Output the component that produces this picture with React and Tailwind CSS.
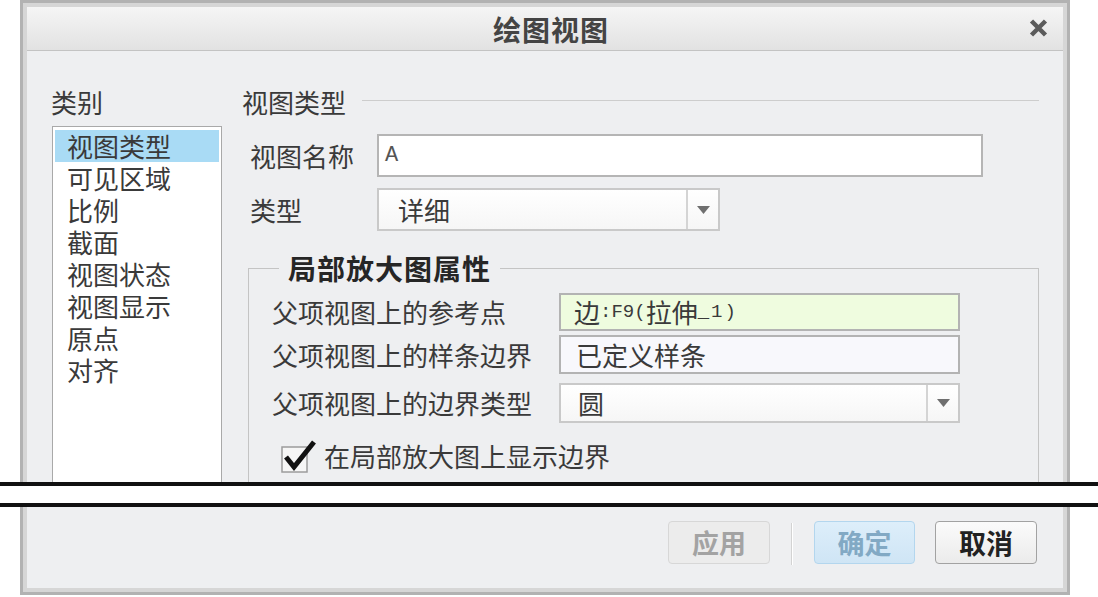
const categories = ['视图类型', '可见区域', '比例', '截面', '视图状态', '视图显示', '原点', '对齐'];

const Arrow = () => (
  <svg width="13" height="8" viewBox="0 0 13 8">
    <path d="M0 0 L13 0 L6.5 8 Z" fill="#6f6f6f" />
  </svg>
);

const Select = ({ value, className }) => (
  <div className={`flex h-full border-2 border-[#c9c9c9] bg-gradient-to-b from-white to-[#f6f6f6] ${className}`}>
    <div className="flex-1 flex items-center leading-none">{value}</div>
    <div className="w-[32px] border-l-2 border-[#d4d4d4] flex items-center justify-center">
      <Arrow />
    </div>
  </div>
);

const PropRow = ({ label, children, className }) => (
  <div className={`flex items-center ${className}`}>
    <div className="w-[310px] pl-[23px] leading-none">{label}</div>
    {children}
  </div>
);

const App = () => {
  return (
    <div className="w-[1098px] h-[597px] bg-white overflow-hidden text-[26px] text-[#3a3a3a] font-['Noto_Sans_CJK_SC',sans-serif]">
      {/* upper half of the dialog */}
      <div className="ml-[20px] w-[1050px] h-[482px] border-x-[3px] border-t-[3px] border-[#b2b2b2] overflow-hidden">
        <div className="h-full border-x-[4px] border-t-[4px] border-[#d6d6d6] bg-[#eeeff1] flex flex-col">
          <div className="h-[44px] shrink-0 border-b border-[#c3c3c3] bg-gradient-to-b from-[#f5f5f5] to-[#e2e2e2] flex items-center relative">
            <div className="flex-1 text-center text-[28px] font-bold tracking-[1px] text-[#444] leading-none pl-[12px]">绘图视图</div>
            <div className="absolute right-[15px] top-[12px]">
              <svg width="19" height="18" viewBox="0 0 19 18">
                <path d="M2.5 2 L16.5 16 M16.5 2 L2.5 16" stroke="#5b5b5b" strokeWidth="4.5" />
              </svg>
            </div>
          </div>

          <div className="flex pl-[24px]">
            <div className="w-[171px] pt-[36px]">
              <div className="leading-[30px]">类别</div>
              <div className="mt-[9px] ml-[1px] w-[170px] h-[400px] border border-[#a9a9a9] bg-white pt-[3px] px-[2px]">
                {categories.map((c, i) => (
                  <div
                    key={c}
                    className={`h-[32px] leading-[32px] pl-[12px] ${i === 0 ? 'bg-[#a9dbf5]' : ''}`}
                  >
                    {c}
                  </div>
                ))}
              </div>
            </div>

            <div className="ml-[20px] w-[797px] pt-[36px]">
              <div className="flex items-center h-[30px]">
                <span className="leading-none">视图类型</span>
                <div className="flex-1 h-px bg-[#cdcdcd] ml-[16px] mb-[4px]" />
              </div>

              <div className="flex items-center mt-[17px] h-[43px]">
                <div className="w-[135px] pl-[8px] leading-none">视图名称</div>
                <div className="w-[606px] h-full border-2 border-[#b5b5b5] bg-white flex items-center pl-[6px] text-[22px] text-[#555] font-['Liberation_Mono',monospace]">
                  A
                </div>
              </div>

              <div className="flex items-center mt-[11px] h-[43px]">
                <div className="w-[135px] pl-[8px] leading-none">类型</div>
                <Select value="详细" className="w-[343px] pl-[19px]" />
              </div>

              <fieldset className="mt-[21px] ml-[6px] w-[791px] border border-[#c4c4c4] pb-[40px]">
                <legend className="ml-[30px] px-[9px] leading-[32px] text-[28px] font-bold tracking-[1px] text-[#262626]">
                  局部放大图属性
                </legend>

                <PropRow label="父项视图上的参考点" className="mt-[9px] h-[38px]">
                  <div className="w-[401px] h-full border-2 border-[#b3b3b3] bg-[#effcdf] flex items-center pl-[13px] leading-none">
                    <span>边</span>
                    <span className="text-[19px] font-['Liberation_Mono',monospace]">:F9(</span>
                    <span>拉伸</span>
                    <span className="text-[19px] font-['Liberation_Mono',monospace] tracking-[2px]">_1)</span>
                  </div>
                </PropRow>

                <PropRow label="父项视图上的样条边界" className="mt-[4px] h-[39px]">
                  <div className="w-[401px] h-full border-2 border-[#b3b3b3] bg-[#f8f8fc] flex items-center pl-[15px] leading-none">
                    已定义样条
                  </div>
                </PropRow>

                <PropRow label="父项视图上的边界类型" className="mt-[9px] h-[40px]">
                  <Select value="圆" className="w-[401px] pl-[17px]" />
                </PropRow>

                <div className="flex items-center mt-[16px] h-[34px] pl-[32px]">
                  <svg width="36" height="34" viewBox="0 0 36 34">
                    <rect x="1" y="8" width="25" height="25" fill="#f6f6f6" stroke="#9c9c9c" strokeWidth="1.5" />
                    <path d="M5 18 L13 28 L33 3" fill="none" stroke="#111" strokeWidth="5" />
                  </svg>
                  <span className="ml-[7px] leading-none">在局部放大图上显示边界</span>
                </div>
              </fieldset>
            </div>
          </div>
        </div>
      </div>

      {/* break marks */}
      <div className="h-[4px] bg-[#111]" />
      <div className="h-[17px] bg-white" />
      <div className="h-[4px] bg-[#111]" />

      {/* lower half of the dialog */}
      <div className="ml-[20px] w-[1050px] h-[88px] border-x-[3px] border-b-[3px] border-[#b2b2b2]">
        <div className="h-full border-x-[4px] border-b-[4px] border-[#d6d6d6] bg-[#eeeff1] flex justify-end items-start pt-[14px] pr-[26px]">
          <button className="w-[102px] h-[43px] rounded-[4px] border border-[#d7d7d7] bg-[#ececec] text-[27px] font-bold text-[#a3a3a3] leading-none">
            应用
          </button>
          <div className="mx-[21px] mt-[2px] h-[42px] w-[2px] border-l border-[#d3d3d3] bg-white" />
          <button className="w-[101px] h-[43px] rounded-[4px] border border-[#b3d6ee] bg-gradient-to-b from-[#ddeefa] to-[#cfe5f5] text-[27px] font-bold text-[#82a9c4] leading-none">
            确定
          </button>
          <button className="ml-[20px] w-[102px] h-[43px] rounded-[4px] border border-[#a2a2a2] bg-gradient-to-b from-[#fbfbfb] to-[#ebebeb] text-[27px] font-bold text-[#222] leading-none">
            取消
          </button>
        </div>
      </div>
    </div>
  );
};

export default App;
